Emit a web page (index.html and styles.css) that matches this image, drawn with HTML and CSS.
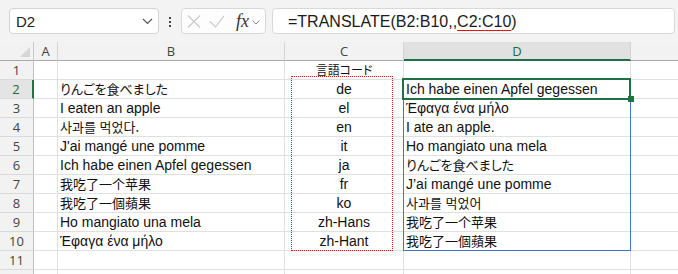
FILE: index.html
```html
<!DOCTYPE html>
<html lang="ja">
<head>
    <meta charset="UTF-8">
    <title>TRANSLATE</title>
    <link rel="stylesheet" href="styles.css">
</head>
<body>
    <!-- Name box and formula bar -->
    <div class="topbar">
        <div class="namebox">
            <span>D2</span>
            <svg width="11" height="7" viewBox="0 0 11 7"><path d="M1 1l4.5 4.5L10 1" fill="none" stroke="#555" stroke-width="1.2"/></svg>
        </div>
        <div class="grip"><i></i><i></i><i></i></div>
        <div class="fxbox">
            <svg class="cancel" width="14" height="13" viewBox="0 0 14 13"><path d="M1 0.5l12 12M13 0.5L1 12.5" stroke="#c8c8c8" stroke-width="1.1" fill="none"/></svg>
            <svg class="enter" width="16" height="13" viewBox="0 0 16 13"><path d="M1 6.5l5.5 5.5L15 0.8" fill="none" stroke="#c8c8c8" stroke-width="1.1"/></svg>
            <span class="fx">fx</span>
            <svg class="fxmore" width="8" height="5" viewBox="0 0 8 5"><path d="M0.5 0.5l3.5 3.5L7.5 0.5" fill="none" stroke="#888" stroke-width="1"/></svg>
        </div>
        <div class="formula">=TRANSLATE(B2:B10,,<span class="ref">C2:C10</span>)</div>
    </div>

    <!-- Worksheet -->
    <div class="sheet">
        <div class="grid">
            <div class="corner"></div>
            <div class="ch">A</div>
            <div class="ch">B</div>
            <div class="ch">C</div>
            <div class="ch sel">D</div>
            <div class="ch"></div>

            <div class="rh">1</div><div class="cell"></div><div class="cell"></div><div class="cell mid ja head">言語コード</div><div class="cell"></div><div class="cell"></div>
            <div class="rh sel">2</div><div class="cell"></div><div class="cell ja">りんごを食べました</div><div class="cell mid">de</div><div class="cell">Ich habe einen Apfel gegessen</div><div class="cell"></div>
            <div class="rh">3</div><div class="cell"></div><div class="cell">I eaten an apple</div><div class="cell mid">el</div><div class="cell" lang="el">Έφαγα ένα μήλο</div><div class="cell"></div>
            <div class="rh">4</div><div class="cell"></div><div class="cell ko" lang="ko">사과를 먹었다.</div><div class="cell mid">en</div><div class="cell">I ate an apple.</div><div class="cell"></div>
            <div class="rh">5</div><div class="cell"></div><div class="cell">J'ai mangé une pomme</div><div class="cell mid">it</div><div class="cell">Ho mangiato una mela</div><div class="cell"></div>
            <div class="rh">6</div><div class="cell"></div><div class="cell">Ich habe einen Apfel gegessen</div><div class="cell mid">ja</div><div class="cell ja">りんごを食べました</div><div class="cell"></div>
            <div class="rh">7</div><div class="cell"></div><div class="cell sc" lang="zh-Hans">我吃了一个苹果</div><div class="cell mid">fr</div><div class="cell">J’ai mangé une pomme</div><div class="cell"></div>
            <div class="rh">8</div><div class="cell"></div><div class="cell tc" lang="zh-Hant">我吃了一個蘋果</div><div class="cell mid">ko</div><div class="cell ko" lang="ko">사과를 먹었어</div><div class="cell"></div>
            <div class="rh">9</div><div class="cell"></div><div class="cell">Ho mangiato una mela</div><div class="cell mid">zh-Hans</div><div class="cell sc" lang="zh-Hans">我吃了一个苹果</div><div class="cell"></div>
            <div class="rh">10</div><div class="cell"></div><div class="cell" lang="el">Έφαγα ένα μήλο</div><div class="cell mid">zh-Hant</div><div class="cell tc" lang="zh-Hant">我吃了一個蘋果</div><div class="cell"></div>
            <div class="rh">11</div><div class="cell"></div><div class="cell"></div><div class="cell"></div><div class="cell"></div><div class="cell"></div>
            <div class="rh"></div><div class="cell"></div><div class="cell"></div><div class="cell"></div><div class="cell"></div><div class="cell"></div>
        </div>

        <!-- overlays: referenced range, spill range, active cell -->
        <div class="refbox"></div>
        <div class="spill"></div>
        <div class="active"></div>
        <div class="handle"></div>
    </div>
</body>
</html>
```

FILE: styles.css
```css
body {
    margin: 0;
    width: 678px;
    height: 274px;
    overflow: hidden;
    background: #ffffff;
    font-family: "Liberation Sans", "Noto Sans CJK JP", sans-serif;
    color: #111111;
}
.topbar {
    display: flex;
    align-items: flex-start;
    height: 42px;
    box-sizing: border-box;
    padding: 8px 3px 0 9px;
    background: #f3f3f3;
}
.namebox {
    display: flex;
    align-items: center;
    justify-content: space-between;
    width: 150px;
    height: 26px;
    box-sizing: border-box;
    padding: 0 5px 0 6px;
    background: #ffffff;
    border: 1px solid #d4d4d4;
    border-radius: 4px;
    font-size: 15px;
    color: #222;
}
.grip {
    display: flex;
    flex-direction: column;
    align-items: center;
    gap: 2px;
    width: 22px;
    padding-top: 9px;
}
.grip i {
    display: block;
    width: 2px;
    height: 2px;
    background: #444;
}
.fxbox {
    display: flex;
    align-items: center;
    width: 85px;
    height: 26px;
    box-sizing: border-box;
    padding-left: 5px;
    background: #fdfdfd;
    border: 1px solid #d8d8d8;
    border-radius: 4px;
}
.enter {
    margin-left: 8px;
}
.fx {
    margin-left: 11px;
    font-family: "Liberation Serif", serif;
    font-style: italic;
    font-size: 18px;
    color: #333;
    line-height: 18px;
}
.fxmore {
    margin-left: 3px;
    margin-top: 2px;
}
.formula {
    flex: 1;
    height: 26px;
    margin-left: 6px;
    box-sizing: border-box;
    padding-left: 15px;
    background: #ffffff;
    border: 1px solid #d8d8d8;
    border-radius: 4px;
    font-size: 16px;
    line-height: 25px;
    color: #1a1a1a;
    white-space: nowrap;
}
.ref {
    text-decoration: underline;
    text-decoration-color: #e81010;
    text-underline-offset: 3px;
}

/* worksheet grid */
.sheet {
    position: relative;
    height: 232px;
    overflow: hidden;
}
.grid {
    display: grid;
    width: 750px;
    grid-template-columns: 34px 24px 227px 119px 227px 119px;
    grid-auto-rows: 19px;
}
.grid > div {
    box-sizing: border-box;
    white-space: nowrap;
    overflow: hidden;
}
.corner {
    position: relative;
    background: #f2f2f2;
    border-right: 1px solid #c8c8c8;
    border-bottom: 1px solid #aaaaaa;
}
.corner::after {
    content: "";
    position: absolute;
    right: 3px;
    bottom: 3px;
    width: 10px;
    height: 10px;
    background: #d6d6d6;
    clip-path: polygon(100% 0, 100% 100%, 0 100%);
}
.ch {
    background: #f2f2f2;
    border-right: 1px solid #d4d4d4;
    border-bottom: 1px solid #aaaaaa;
    text-align: center;
    font-family: "Open Sans", "Liberation Sans", sans-serif;
    font-size: 13px;
    line-height: 18px;
    color: #444;
}
.ch.sel {
    background: #e1e1e1;
    border-bottom: 2px solid #1e7145;
    color: #1b6b3f;
}
.rh {
    background: #f2f2f2;
    border-right: 1px solid #c0c0c0;
    border-bottom: 1px solid #dadada;
    text-align: center;
    font-family: "Open Sans", "Liberation Sans", sans-serif;
    font-size: 13px;
    line-height: 18px;
    color: #444;
}
.rh.sel {
    background: #e4e4e4;
    border-right: 2px solid #1e7145;
    color: #1b6b3f;
}
.cell {
    border-right: 1px solid #e0e0e0;
    border-bottom: 1px solid #e0e0e0;
    padding: 0 2px;
    font-size: 14px;
    line-height: 18px;
}
.mid {
    text-align: center;
}
.ja {
    font-family: "Noto Sans CJK JP", sans-serif;
    font-size: 13px;
    font-feature-settings: "palt";
}
.ko {
    font-family: "Noto Sans CJK KR", sans-serif;
    font-size: 13px;
}
.sc {
    font-family: "Noto Sans CJK SC", sans-serif;
    font-size: 13px;
}
.tc {
    font-family: "Noto Sans CJK TC", sans-serif;
    font-size: 13px;
}
.head {
    font-size: 12px;
    line-height: 17px;
}

.refbox {
    position: absolute;
    left: 291px;
    top: 34px;
    width: 102px;
    height: 175px;
    box-sizing: border-box;
    border: 1px dotted #ee1111;
}
.spill {
    position: absolute;
    left: 403px;
    top: 37px;
    width: 228px;
    height: 172px;
    box-sizing: border-box;
    border: 1.5px solid #3a74d6;
}
.active {
    position: absolute;
    left: 402px;
    top: 36px;
    width: 229px;
    height: 22px;
    box-sizing: border-box;
    border: 2px solid #1e7145;
}
.handle {
    position: absolute;
    left: 628px;
    top: 54px;
    width: 6px;
    height: 6px;
    background: #1e7145;
}
```
